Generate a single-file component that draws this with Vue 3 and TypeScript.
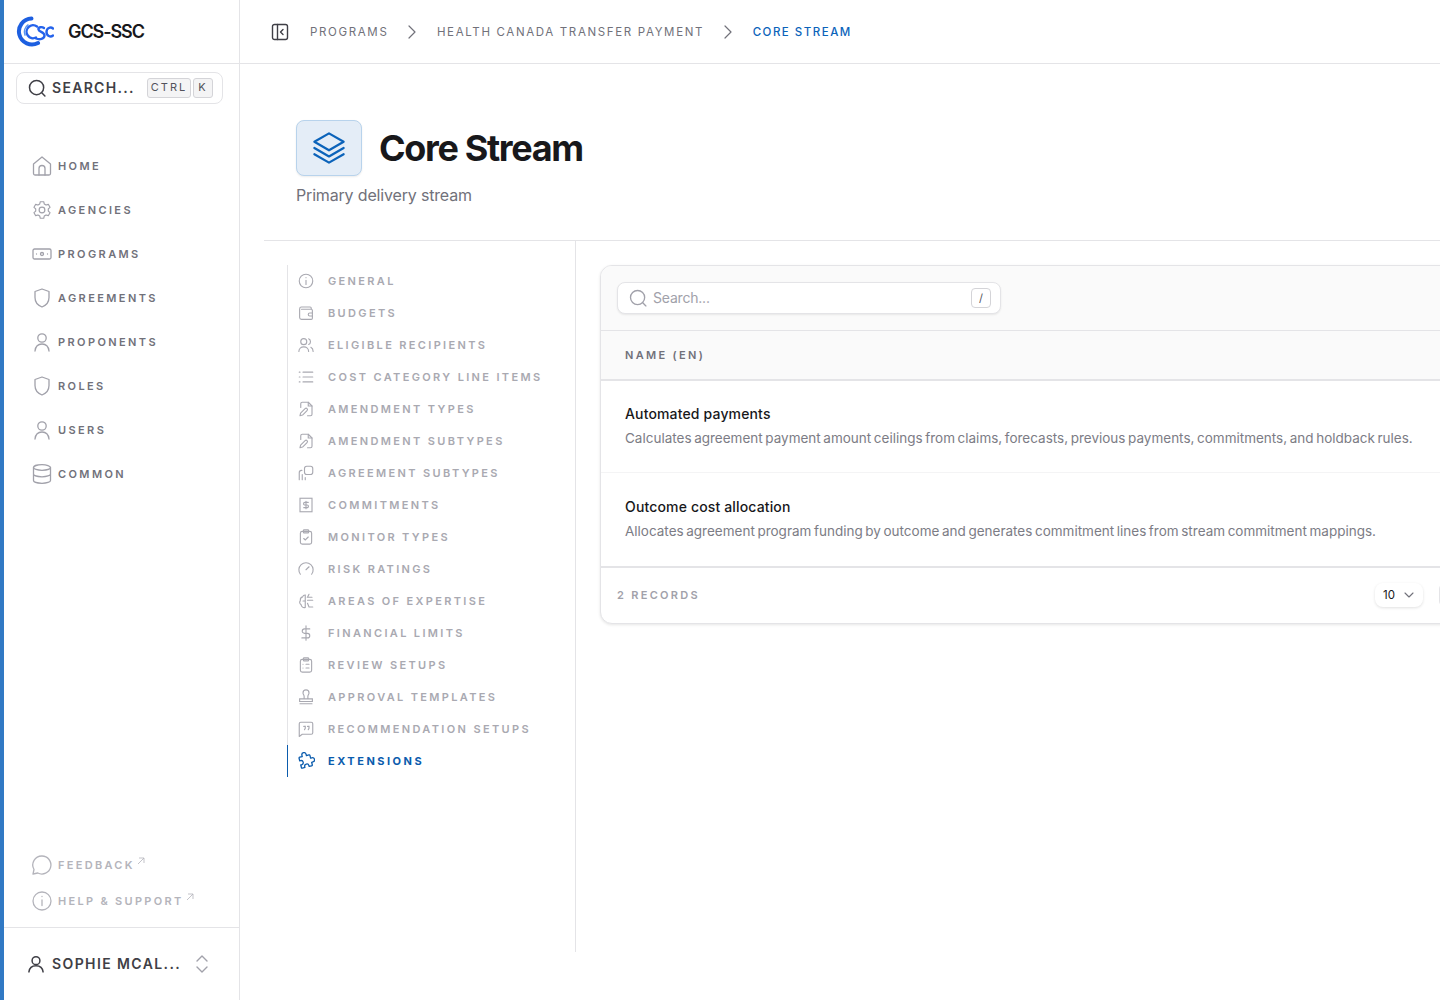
<script setup lang="ts">
interface Item { label: string; icon: string }
const I = {
  home: '<path d="M3.500 10 12 3l8.500 7v9.500a1.500 1.500 0 0 1-1.500 1.500H5a1.500 1.500 0 0 1-1.500-1.500z" stroke-linejoin="round"/><path d="M9 21v-6.500a3 3 0 0 1 6 0V21"/>',
  gear: '<g transform="translate(1.200 1.200) scale(.9)"><path d="M10.100 2.800h3.800l.6 2.500 2 1.200 2.500-.8 1.900 3.300-1.900 1.800v2.400l1.900 1.800-1.900 3.300-2.500-.8-2 1.200-.6 2.500h-3.800l-.6-2.500-2-1.200-2.500.8-1.900-3.300 1.900-1.800v-2.400L3.100 9l1.900-3.300 2.500.8 2-1.200z" stroke-linejoin="round"/><circle cx="12" cy="12" r="3.200"/></g>',
  money: '<rect x="3" y="7" width="18" height="10" rx="1.500"/><circle cx="12" cy="12" r="1.500"/><path d="M6.500 12h.01M17.500 12h.01"/>',
  shield: '<path d="M12 3 5 5.500v6c0 5 3.200 8 7 9.500 3.800-1.500 7-4.500 7-9.500v-6z" stroke-linejoin="round"/>',
  user: '<circle cx="12" cy="8" r="4.200"/><path d="M5 21c.5-4.500 3.300-7 7-7s6.500 2.500 7 7"/>',
  db: '<ellipse cx="12" cy="5.500" rx="8.500" ry="2.800"/><path d="M3.500 5.500v13c0 1.500 3.800 2.800 8.500 2.800s8.500-1.300 8.500-2.800v-13M3.500 12c0 1.500 3.800 2.800 8.500 2.800s8.500-1.300 8.500-2.800"/>',
  chat: '<path d="M12 3a9 9 0 1 1-4.200 17L3 21l1-4.500A9 9 0 0 1 12 3z" stroke-linejoin="round"/>',
  info: '<circle cx="12" cy="12" r="9"/><path d="M12 11v5.500M12 7.500h.01"/>',
  wallet: '<path d="M19 7V5.500A1.500 1.500 0 0 0 17.500 4H6a2.500 2.500 0 0 0-2.500 2.500V18A2.500 2.500 0 0 0 6 20.500h13a1.500 1.500 0 0 0 1.500-1.500V8.500A1.500 1.500 0 0 0 19 7H6"/><path d="M20.500 12H17a2 2 0 0 0 0 4h3.500"/>',
  users: '<circle cx="9" cy="7.500" r="4"/><path d="M2.500 20.500c0-3.500 2.800-6 6.500-6s6.500 2.500 6.500 6M15.500 3.800a4 4 0 0 1 0 7.400M18.500 15c1.800.9 3 2.900 3 5.500"/>',
  list: '<path d="M8 5.500h13M8 12h13M8 18.500h13M3 5.500h1M3 12h1M3 18.500h1"/>',
  docpen: '<path d="M5 10V5a2 2 0 0 1 2-2h8l5 5v11a2 2 0 0 1-2 2h-4" stroke-linejoin="round"/><path d="M15 3v5h5"/><path d="m4 21 .8-3.500 6-6a1.800 1.800 0 0 1 2.600 2.600l-6 6z" stroke-linejoin="round"/>',
  copies: '<rect x="10" y="3" width="11" height="11" rx="3"/><path d="M6.500 8.500H6A3 3 0 0 0 3 11.500V21M7 14v7M11 18v3"/>',
  receipt: '<rect x="4" y="3" width="16" height="18"/><path d="M15 8.500h-4.500a1.750 1.750 0 0 0 0 3.500h3a1.750 1.750 0 0 1 0 3.500H9M12 7v10"/>',
  clipcheck: '<rect x="4.500" y="4.500" width="15" height="17" rx="2.500"/><rect x="8.500" y="2.500" width="7" height="4" rx="1"/><path d="m9 14 2 2 4-4"/>',
  gauge: '<path d="M4.500 19a9.500 9.500 0 1 1 15 0"/><path d="m12 13 4-4"/>',
  brain: '<path d="M11 4a3.500 3.500 0 0 0-3.500 2.500A4 4 0 0 0 4.500 11a4.500 4.500 0 0 0 1 6 4 4 0 0 0 5.500 3.500zM11 12H8M16 3l-2 4h6M14 11h7M14 15l2 5h5"/>',
  dollar: '<path d="M12 2.500v19M17 6.500h-7a3 3 0 0 0 0 6h4a3 3 0 0 1 0 6H6.500"/>',
  cliplist: '<rect x="4.500" y="4.500" width="15" height="17" rx="2.500"/><rect x="8.500" y="2.500" width="7" height="4" rx="1"/><path d="M12 11h4M12 16h4M8 11h.01M8 16h.01"/>',
  stamp: '<path d="M4 21h16M3.500 14.500h17v3.500h-17zM9.500 14.500V11c0-1.500-1.500-2.500-1.500-4.500a4 4 0 0 1 8 0c0 2-1.500 3-1.500 4.500v3.500"/>',
  quote: '<path d="M3 5a2 2 0 0 1 2-2h14a2 2 0 0 1 2 2v12a2 2 0 0 1-2 2H7l-4 3z" stroke-linejoin="round"/><path d="M9 8.500h2V11l-1 2M14 8.500h2V11l-1 2"/>',
  puzzle: '<g transform="rotate(-14 12 12) translate(-1.800 -1.800) scale(1.150)"><path d="M9 4.500a2.500 2.500 0 0 1 5 0V6h3a1 1 0 0 1 1 1v3h1.500a2.500 2.500 0 0 1 0 5H18v3a1 1 0 0 1-1 1h-3v-1a2.500 2.500 0 0 0-5 0v1H6a1 1 0 0 1-1-1v-3h1a2.500 2.500 0 0 0 0-5H5V7a1 1 0 0 1 1-1h3z" stroke-linejoin="round"/></g>',
}
const nav: Item[] = [
  { label: 'Home', icon: I.home },
  { label: 'Agencies', icon: I.gear },
  { label: 'Programs', icon: I.money },
  { label: 'Agreements', icon: I.shield },
  { label: 'Proponents', icon: I.user },
  { label: 'Roles', icon: I.shield },
  { label: 'Users', icon: I.user },
  { label: 'Common', icon: I.db },
]
const foot: Item[] = [
  { label: 'Feedback', icon: I.chat },
  { label: 'Help & Support', icon: I.info },
]
const sub: Item[] = [
  { label: 'General', icon: I.info },
  { label: 'Budgets', icon: I.wallet },
  { label: 'Eligible Recipients', icon: I.users },
  { label: 'Cost Category Line Items', icon: I.list },
  { label: 'Amendment Types', icon: I.docpen },
  { label: 'Amendment Subtypes', icon: I.docpen },
  { label: 'Agreement Subtypes', icon: I.copies },
  { label: 'Commitments', icon: I.receipt },
  { label: 'Monitor Types', icon: I.clipcheck },
  { label: 'Risk Ratings', icon: I.gauge },
  { label: 'Areas of Expertise', icon: I.brain },
  { label: 'Financial Limits', icon: I.dollar },
  { label: 'Review Setups', icon: I.cliplist },
  { label: 'Approval Templates', icon: I.stamp },
  { label: 'Recommendation Setups', icon: I.quote },
  { label: 'Extensions', icon: I.puzzle },
]
const rows = [
  { name: 'Automated payments', desc: 'Calculates agreement payment amount ceilings from claims, forecasts, previous payments, commitments, and holdback rules.' },
  { name: 'Outcome cost allocation', desc: 'Allocates agreement program funding by outcome and generates commitment lines from stream commitment mappings.' },
]
</script>

<template>
  <div class="app">
    <aside class="side">
      <div class="brand">
        <svg class="logo" viewBox="0 0 38 32" fill="none" stroke-linecap="round">
          <path d="M15.500 2.500A13 13 0 1 0 22 27" stroke="#1d5fe0" stroke-width="4"/>
          <path d="M12 9a8.500 8.500 0 0 0-3 10" stroke="#5b97f0" stroke-width="1.600"/>
          <path d="M21 10.500a6.500 6.500 0 1 0-1 11" stroke="#2563eb" stroke-width="2.400"/>
          <path d="M28 12c-2-1.500-6-1-5.500 1.500s6 2.500 6 6-5 4.500-8.500 3" stroke="#2563eb" stroke-width="2.400"/>
          <path d="M37 12.500c-2.500-2-6.500-.5-6.500 3.500s4 5.500 6.500 3.500" stroke="#2563eb" stroke-width="2.400"/>
        </svg>
        <span class="brand-name">GCS-SSC</span>
      </div>
      <div class="side-search">
        <svg class="ic20" viewBox="0 0 24 24" fill="none" stroke="#3f3f46" stroke-width="1.800" stroke-linecap="round"><circle cx="11.500" cy="11.500" r="8.500"/><path d="m18 18 3.500 3.500"/></svg>
        <span class="ss-text">Search...</span>
        <span class="keys"><kbd class="key k-ctrl">CTRL</kbd><kbd class="key">K</kbd></span>
      </div>
      <nav class="nav">
        <a v-for="n in nav" :key="n.label" class="nav-item">
          <svg class="ic24 nav-ic" viewBox="0 0 24 24" fill="none" stroke="currentColor" stroke-width="1.300" stroke-linecap="round" v-html="n.icon"></svg>
          <span>{{ n.label }}</span>
        </a>
      </nav>
      <div class="foot-links">
        <a v-for="f in foot" :key="f.label" class="foot-item">
          <svg class="ic24" viewBox="0 0 24 24" fill="none" stroke="currentColor" stroke-width="1.300" stroke-linecap="round" v-html="f.icon"></svg>
          <span>{{ f.label }}</span>
          <svg class="ext" viewBox="0 0 8 8" fill="none" stroke="currentColor" stroke-width=".8"><path d="M1 7 7 1M2 1h5v5"/></svg>
        </a>
      </div>
      <div class="me">
        <svg class="ic20" viewBox="0 0 24 24" fill="none" stroke="#3f3f46" stroke-width="1.800" stroke-linecap="round"><circle cx="12" cy="8" r="4.700"/><path d="M3.500 21.500c.5-4.800 3.800-7.500 8.500-7.500s8 2.700 8.500 7.500"/></svg>
        <span class="me-name">Sophie McAl...</span>
        <svg class="updown" viewBox="0 0 16 20" fill="none" stroke="#a1a1aa" stroke-width="1.400" stroke-linecap="round" stroke-linejoin="round"><path d="m3 7 5-5 5 5M3 13l5 5 5-5"/></svg>
      </div>
    </aside>

    <main class="main">
      <header class="top">
        <svg class="collapse" viewBox="0 0 18 18" fill="none" stroke="#3f3f46" stroke-width="1.400" stroke-linecap="round" stroke-linejoin="round"><rect x="1.500" y="1.500" width="15" height="15" rx="2"/><path d="M6.500 1.500v15M12 6.500 9.500 9l2.500 2.500"/></svg>
        <ol class="crumbs">
          <li>Programs</li>
          <li class="sep"><svg viewBox="0 0 10 16" fill="none" stroke="#71717a" stroke-width="1.200" stroke-linecap="round" stroke-linejoin="round"><path d="m2 2 6 6-6 6"/></svg></li>
          <li>Health Canada Transfer Payment</li>
          <li class="sep"><svg viewBox="0 0 10 16" fill="none" stroke="#71717a" stroke-width="1.200" stroke-linecap="round" stroke-linejoin="round"><path d="m2 2 6 6-6 6"/></svg></li>
          <li class="cur">Core Stream</li>
        </ol>
      </header>

      <div class="body">
        <section class="head">
          <div class="title-row">
            <div class="tile">
              <svg viewBox="0 0 32 32" fill="none" stroke="#0b63ba" stroke-width="2" stroke-linecap="round" stroke-linejoin="round"><path d="M16 3 29 10.500 16 18 3 10.500z"/><path d="m3 16 13 7.500L29 16"/><path d="m3 21.500 13 7.500 13-7.500"/></svg>
            </div>
            <h1>Core Stream</h1>
          </div>
          <p class="subtitle">Primary delivery stream</p>
        </section>

        <div class="split">
          <div class="left">
            <ul class="sub">
              <li v-for="s in sub" :key="s.label" class="sub-item" :class="{ active: s.label === 'Extensions' }">
                <svg class="ic18" viewBox="0 0 24 24" fill="none" stroke="currentColor" stroke-width="1.500" stroke-linecap="round" v-html="s.icon"></svg>
                <span>{{ s.label }}</span>
              </li>
            </ul>
          </div>
          <div class="right">
            <div class="card">
              <div class="toolbar">
                <div class="t-search">
                  <svg class="ic20" viewBox="0 0 24 24" fill="none" stroke="#a1a1aa" stroke-width="1.600" stroke-linecap="round"><circle cx="11.500" cy="11.500" r="8.500"/><path d="m18 18 3.500 3.500"/></svg>
                  <span class="ph">Search...</span>
                  <kbd class="slash">/</kbd>
                </div>
              </div>
              <div class="thead">Name (EN)</div>
              <div v-for="r in rows" :key="r.name" class="row">
                <div class="r-name">{{ r.name }}</div>
                <div class="r-desc">{{ r.desc }}</div>
              </div>
              <div class="tfoot">
                <span class="count">2 Records</span>
                <div class="pager">
                  <div class="size"><span>10</span>
                    <svg viewBox="0 0 12 12" fill="none" stroke="#71717a" stroke-width="1.100" stroke-linecap="round" stroke-linejoin="round"><path d="m2 4 4 4 4-4"/></svg>
                  </div>
                  <div class="page-btn"></div>
                </div>
              </div>
            </div>
          </div>
        </div>
      </div>
    </main>
  </div>
</template>

<style>
html, body { margin: 0; overflow: hidden; background: #fff; }
</style>

<style scoped>
.app { display: flex; height: 1000px; width: 1440px; overflow: hidden; font-family: Inter, "Liberation Sans", sans-serif; color: #18181b; background: #fff; }
.side { flex: 0 0 240px; box-sizing: border-box; width: 240px; height: 1000px; border-left: 4px solid #3179c4; border-right: 1px solid #e4e4e7; display: flex; flex-direction: column; }
.brand { height: 64px; box-sizing: border-box; border-bottom: 1px solid #e4e4e7; display: flex; align-items: center; padding-left: 12px; gap: 14px; flex: none; }
.logo { width: 38px; height: 32px; }
.brand-name { font-size: 18px; font-weight: 600; letter-spacing: -1.100px; color: #18181b; }
.side-search { box-sizing: border-box; margin: 8px 16px 0 12px; height: 32px; border: 1px solid #e4e4e7; border-radius: 8px; display: flex; align-items: center; padding: 0 9px 0 10px; flex: none; }
.ic20 { width: 20px; height: 20px; flex: none; }
.ic24 { width: 24px; height: 24px; flex: none; }
.ic18 { width: 18px; height: 18px; flex: none; }
.ss-text { margin-left: 5px; margin-top: -1px; font-size: 14px; font-weight: 600; letter-spacing: 1.300px; text-transform: uppercase; color: #3f3f46; }
.keys { margin-left: auto; display: flex; gap: 2px; }
.key { box-sizing: border-box; font-family: Inter, sans-serif; font-size: 11px; letter-spacing: 2px; line-height: 16px; width: 20px; height: 20px; text-align: center; border: 1px solid #d4d4d8; border-radius: 3px; background: #f4f4f5; color: #52525b; }
.k-ctrl { width: 44px; }
.nav { display: flex; flex-direction: column; gap: 12px; margin-top: 46px; padding-left: 26px; }
.nav-item { display: flex; align-items: center; height: 32px; gap: 4px; font-size: 11px; font-weight: 600; letter-spacing: 2.400px; text-transform: uppercase; color: #71717a; }
.nav-ic { color: #a1a1aa; }
.foot-links { margin-top: auto; display: flex; flex-direction: column; gap: 8px; padding: 0 0 12px 26px; }
.foot-item { height: 28px; display: flex; align-items: center; gap: 4px; font-size: 11px; font-weight: 600; letter-spacing: 2.300px; text-transform: uppercase; color: #b4b4bb; }
.ext { width: 8px; height: 8px; margin: -8px 0 0 -2px; flex: none; }
.me { height: 73px; box-sizing: border-box; border-top: 1px solid #e4e4e7; display: flex; align-items: center; padding: 0 29px 0 22px; flex: none; }
.me-name { margin-left: 6px; margin-top: -1px; font-size: 14px; font-weight: 600; letter-spacing: 1.400px; text-transform: uppercase; color: #3f3f46; white-space: nowrap; }
.updown { width: 16px; height: 20px; margin-left: auto; flex: none; }
.main { flex: 1; min-width: 0; display: flex; flex-direction: column; }
.top { height: 64px; flex: none; box-sizing: border-box; border-bottom: 1px solid #e4e4e7; display: flex; align-items: center; padding-left: 31px; }
.collapse { width: 18px; height: 18px; flex: none; }
.crumbs { list-style: none; display: flex; align-items: center; margin: 0 0 0 21px; padding: 0; font-size: 11.500px; letter-spacing: 1.650px; text-transform: uppercase; color: #71717a; white-space: nowrap; }
.sep { width: 10px; height: 16px; margin: 0 20px 0 18.500px; }
.sep svg { display: block; width: 10px; height: 16px; }
.cur { color: #0b63ba; font-weight: 500; letter-spacing: 1.500px; }
.body { flex: 1; min-height: 0; padding: 0 0 48px 24px; display: flex; flex-direction: column; }
.head { height: 177px; flex: none; box-sizing: border-box; border-bottom: 1px solid #e4e4e7; padding: 56px 0 0 32px; }
.title-row { display: flex; align-items: center; gap: 17px; }
.tile { width: 66px; height: 56px; box-sizing: border-box; border: 1px solid #b8d3ec; border-radius: 8px; background: #e4edf7; box-shadow: 0 1px 2px rgba(0,0,0,.08); display: flex; align-items: center; justify-content: center; }
.tile svg { width: 36px; height: 36px; }
h1 { margin: 0; font-size: 36px; line-height: 40px; font-weight: 700; letter-spacing: -1.350px; color: #18181b; }
.subtitle { margin: 8px 0 0; font-size: 16px; line-height: 22px; letter-spacing: -0.170px; color: #71717a; }
.split { flex: 1; min-height: 0; display: flex; }
.left { flex: 0 0 312px; box-sizing: border-box; border-right: 1px solid #e4e4e7; padding: 24px 0 0 23px; }
.sub { list-style: none; margin: 0; padding: 0; border-left: 1px solid #e4e4e7; }
.sub-item { height: 32px; display: flex; align-items: center; gap: 13px; padding-left: 9px; font-size: 11px; font-weight: 600; letter-spacing: 2.350px; text-transform: uppercase; color: #a9a9b1; white-space: nowrap; }
.sub-item.active { color: #0b5cad; font-weight: 700; letter-spacing: 2.500px; border-left: 1px solid #0b5cad; margin-left: -1px; }
.right { flex: 1; min-width: 0; padding: 24px 0 0 24px; }
.card { width: 900px; box-sizing: border-box; border: 1px solid #e4e4e7; border-radius: 12px; box-shadow: 0 1px 3px rgba(0,0,0,.1); overflow: hidden; background: #fff; }
.toolbar { height: 65px; box-sizing: border-box; background: #fafafa; border-bottom: 1px solid #e4e4e7; display: flex; align-items: center; padding-left: 16px; }
.t-search { width: 384px; height: 32px; box-sizing: border-box; background: #fff; border: 1px solid #e4e4e7; border-radius: 8px; box-shadow: 0 1px 2px rgba(0,0,0,.08); display: flex; align-items: center; padding: 0 9px 0 10px; }
.ph { margin-left: 5px; margin-top: -1px; font-size: 14px; letter-spacing: -0.200px; color: #a1a1aa; }
.slash { margin-left: auto; font-family: Inter, sans-serif; font-size: 11px; width: 20px; height: 20px; box-sizing: border-box; border: 1px solid #d4d4d8; border-radius: 4px; display: flex; align-items: center; justify-content: center; color: #52525b; }
.thead { height: 50px; box-sizing: border-box; background: #fafafa; border-bottom: 2px solid #e4e4e7; display: flex; align-items: center; padding-left: 24px; font-size: 11px; font-weight: 600; letter-spacing: 2.300px; text-transform: uppercase; color: #71717a; }
.row { height: 93px; box-sizing: border-box; padding: 24px 0 0 24px; }
.row:nth-of-type(3) { height: 92px; padding-top: 23px; border-bottom: 1px solid #f4f4f5; }
.r-name { font-size: 14px; line-height: 20px; font-weight: 500; letter-spacing: .15px; color: #18181b; white-space: nowrap; }
.r-desc { margin-top: 4px; font-size: 13.500px; line-height: 20px; word-spacing: -1.200px; color: #7c7c85; white-space: nowrap; }
.tfoot { height: 57px; box-sizing: border-box; border-top: 2px solid #e4e4e7; display: flex; align-items: center; padding: 0 28px 2px 16px; }
.count { font-size: 11px; font-weight: 600; letter-spacing: 2.300px; text-transform: uppercase; color: #a1a1aa; }
.pager { margin-left: auto; display: flex; align-items: center; gap: 16px; flex: none; }
.size { width: 48px; height: 24px; box-sizing: border-box; border-radius: 8px; background: #fff; box-shadow: 0 1px 3px rgba(0,0,0,.12); display: flex; align-items: center; padding-left: 8px; gap: 8px; font-size: 11.500px; color: #18181b; }
.size svg { width: 12px; height: 12px; }
.page-btn { width: 32px; height: 24px; flex: none; box-sizing: border-box; border: 1px solid #e4e4e7; border-radius: 6px; }
</style>
